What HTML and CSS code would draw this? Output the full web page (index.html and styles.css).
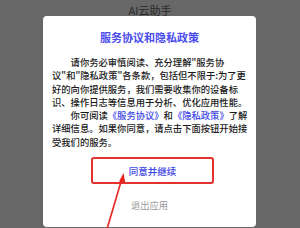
FILE: index.html
```html
<!DOCTYPE html>
<html lang="zh-CN">
<head>
<meta charset="utf-8">
<link rel="stylesheet" href="styles.css">
</head>
<body>
<div class="screen">
  <header class="appbar">AI云助手</header>
  <section class="dialog">
    <h1 class="dialog-title">服务协议和隐私政策</h1>
    <div class="dialog-body">
      <p class="para">请你务必审慎阅读、充分理解"服务协<br>议"和"隐私政策"各条款，包括但不限于:为了更<br>好的向你提供服务，我们需要收集你的设备标<br>识、操作日志等信息用于分析、优化应用性能。</p>
      <p class="para">你可阅读<span class="link">《服务协议》</span>和<span class="link">《隐私政策》</span>了解<br>详细信息。如果你同意，请点击下面按钮开始接<br>受我们的服务。</p>
    </div>
    <div class="actions">
      <button class="btn-agree">同意并继续</button>
      <button class="btn-exit">退出应用</button>
    </div>
  </section>
  <svg class="arrow" width="300" height="228" viewBox="0 0 300 228">
    <line x1="107" y1="229" x2="121.5" y2="180" stroke="#e8231f" stroke-width="1.6" stroke-linecap="round"/>
    <polygon points="123.5,173 119,181.5 125.2,182.6" fill="#e8231f"/>
  </svg>
</div>
</body>
</html>
```
FILE: styles.css
```css
html, body {
  margin: 0;
  padding: 0;
}
body {
  width: 300px;
  height: 228px;
  overflow: hidden;
  background: #676767;
  font-family: "Noto Sans CJK SC", "Noto Sans", sans-serif;
}
.screen {
  position: relative;
  width: 300px;
  height: 228px;
}
.appbar {
  height: 16px;
  line-height: 20px;
  text-align: center;
  font-size: 11px;
  color: #2a2a2a;
}
.dialog {
  width: 213px;
  height: 211px;
  margin-left: 43px;
  background: #fff;
  border-radius: 4px;
  box-sizing: border-box;
  padding-top: 14px;
}
.dialog-title {
  margin: 0;
  font-size: 11px;
  line-height: 14px;
  font-weight: bold;
  text-align: center;
  color: #4b4cee;
}
.dialog-body {
  margin-top: 12px;
  padding: 0 3px 0 9px;
}
.para {
  margin: 0;
  font-size: 9.3px;
  line-height: 13.3px;
  font-weight: 500;
  color: #1a1a1a;
  text-indent: 2em;
  white-space: nowrap;
}
.link {
  color: #3c45e6;
}
.actions {
  display: flex;
  flex-direction: column;
  align-items: center;
}
.btn-agree {
  margin-top: 8px;
  margin-left: 6px;
  width: 123px;
  height: 27px;
  box-sizing: border-box;
  border: 2px solid #e3312e;
  border-radius: 3px;
  background: #fff;
  color: #3c45e6;
  font-family: inherit;
  font-size: 9.5px;
  font-weight: 500;
  padding: 0;
}
.btn-exit {
  margin-top: 14px;
  border: none;
  background: none;
  padding: 0;
  font-family: inherit;
  font-size: 9.3px;
  line-height: 14px;
  color: #9a9a9a;
}
.arrow {
  position: absolute;
  left: 0;
  top: 0;
  pointer-events: none;
}
```
